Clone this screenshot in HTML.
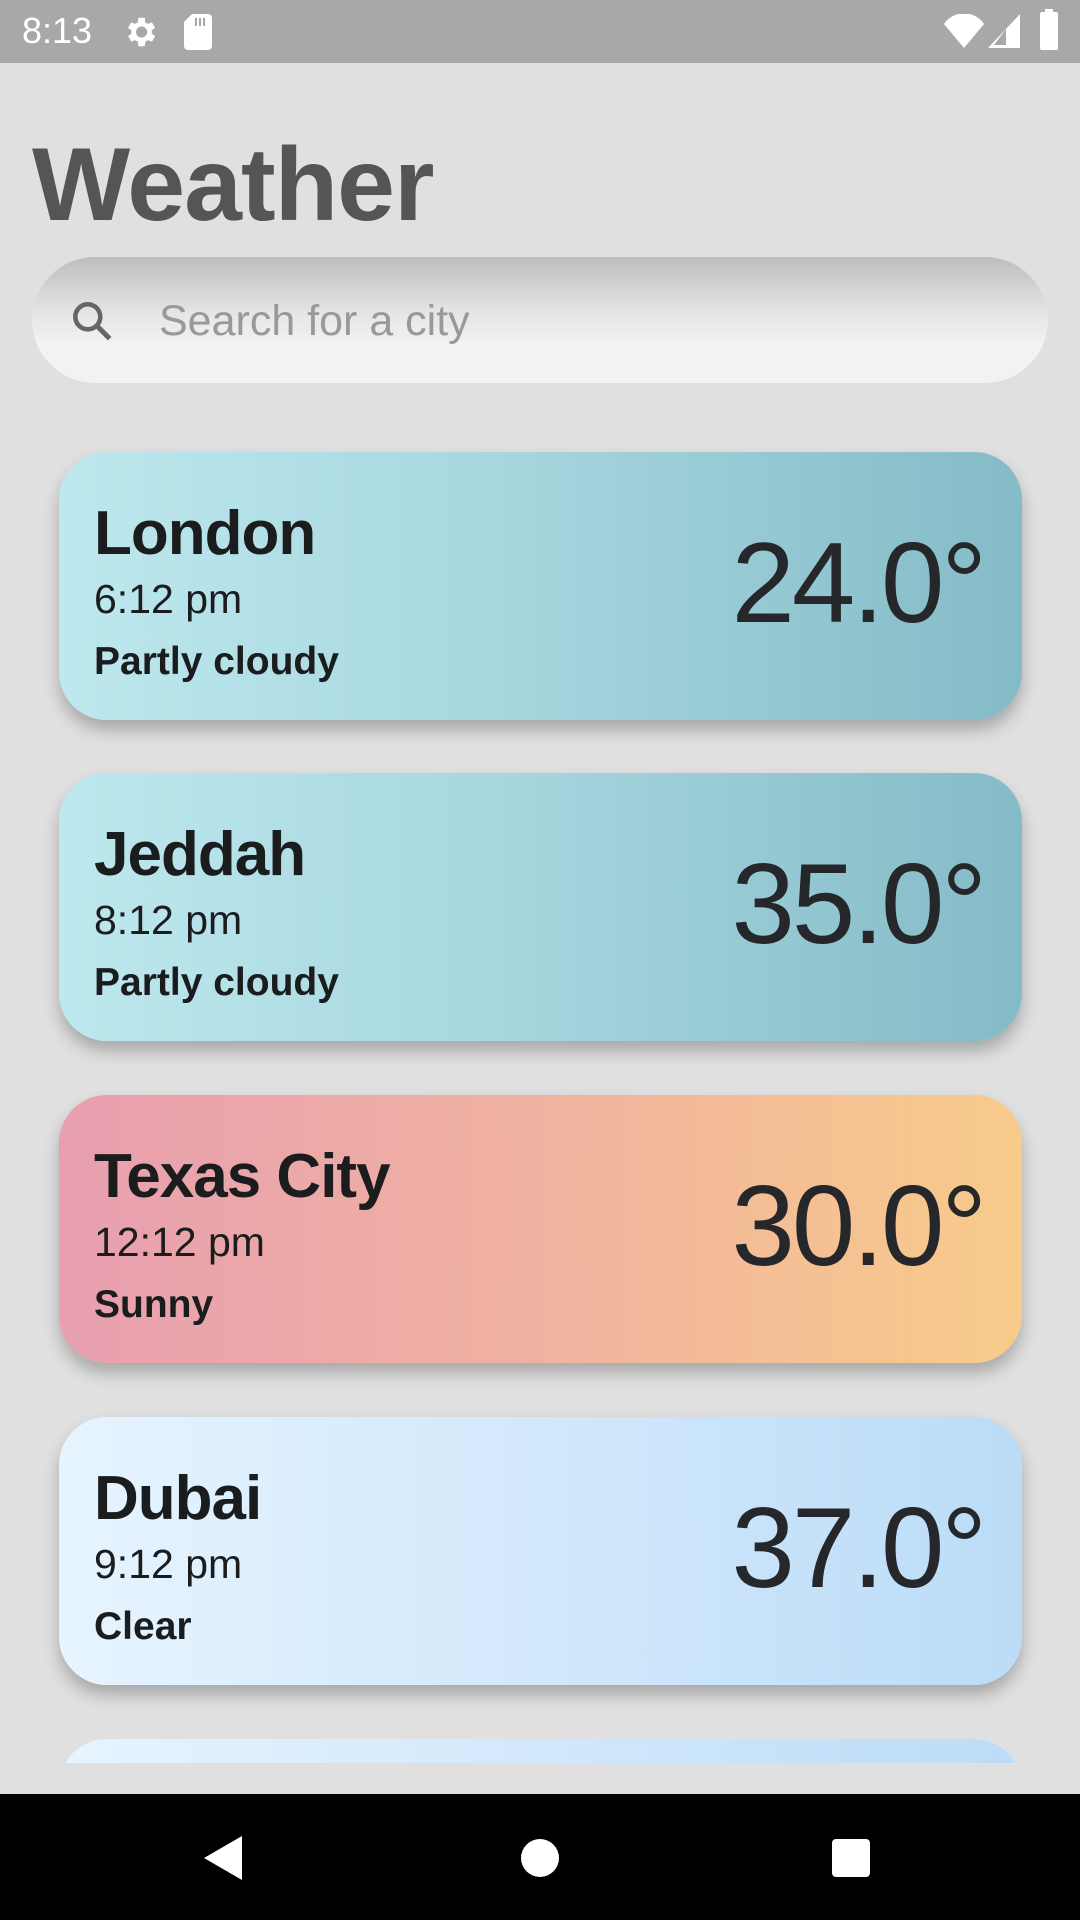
<!DOCTYPE html>
<html><head><meta charset="utf-8"><style>
*{margin:0;padding:0;box-sizing:border-box}
body{width:1080px;height:1920px;background:#e0e0e0;font-family:"Liberation Sans",sans-serif;position:relative;overflow:hidden}
.status{position:absolute;top:0;left:0;width:1080px;height:63px;background:#a8a8a8;color:#fff}
.title{position:absolute;left:32px;top:126px;font-size:104px;font-weight:bold;color:#555;letter-spacing:-1px}
.search{position:absolute;left:32px;top:257px;width:1016px;height:126px;border-radius:63px;background:linear-gradient(#bdbdbd 0%,#e6e6e6 45%,#f2f2f2 70%,#f2f2f2 100%)}
.search .ph{position:absolute;left:127px;top:40px;font-size:43px;color:#999}
.card{position:absolute;left:59px;width:963px;height:268px;border-radius:48px;box-shadow:0 10px 16px rgba(0,0,0,.25);overflow:hidden;color:#1a1c1e}
.card .n{position:absolute;left:35px;top:46px;font-size:62px;font-weight:bold;letter-spacing:-1px}
.card .t{position:absolute;left:35px;top:124px;font-size:41px}
.card .c{position:absolute;left:35px;top:188px;font-size:39px;font-weight:bold}
.card .tp{position:absolute;right:38px;top:66px;font-size:114px;letter-spacing:-3px;color:#25272a}
.blue{background:linear-gradient(90deg,#bde8ee,#a8d7df 45%,#84bbc7)}
.warm{background:linear-gradient(90deg,#e89fb0,#efb0a2 45%,#f8cb8a)}
.sky{background:linear-gradient(90deg,#e6f4ff,#d2e8fb 50%,#bbdcf7)}
.nav{position:absolute;left:0;top:1794px;width:1080px;height:126px;background:#000}
</style></head><body>
<div class="status">
<div style="position:absolute;left:22px;top:10px;font-size:36px">8:13</div>
<svg style="position:absolute;left:121px;top:13px" width="38" height="38" viewBox="0 0 24 24"><path fill="#fff" d="M19.4 13a7.5 7.5 0 0 0 0-2l2.1-1.6-2-3.5-2.5 1a7 7 0 0 0-1.7-1L15 3h-4l-.4 2.9a7 7 0 0 0-1.7 1l-2.5-1-2 3.5L6.6 11a7.5 7.5 0 0 0 0 2l-2.1 1.6 2 3.5 2.5-1a7 7 0 0 0 1.7 1L11 21h4l.4-2.9a7 7 0 0 0 1.7-1l2.5 1 2-3.5zM13 15.5a3.5 3.5 0 1 1 0-7 3.5 3.5 0 0 1 0 7z"/></svg>
<svg style="position:absolute;left:184px;top:14px" width="28" height="36" viewBox="0 0 14 18"><path fill="#fff" d="M4 0h8a2 2 0 0 1 2 2v14a2 2 0 0 1-2 2H2a2 2 0 0 1-2-2V4z"/><path stroke="#a8a8a8" stroke-width="1" d="M6 2v4M8 2v4M10 2v4"/></svg>
<svg style="position:absolute;left:944px;top:14px" width="40" height="34" viewBox="0 0 40 34"><path fill="#fff" d="M0 10 A24 24 0 0 1 40 10 L20 34z"/></svg>
<svg style="position:absolute;left:988px;top:14px" width="32" height="34" viewBox="0 0 32 34"><path fill="#fff" d="M32 0v34H0z"/><path fill="#a8a8a8" d="M18 15v16H6z"/></svg>
<div style="position:absolute;left:1040px;top:12px;width:18px;height:38px;background:#fff;border-radius:2px"></div>
<div style="position:absolute;left:1045px;top:9px;width:8px;height:4px;background:#fff"></div>
</div>
<div class="title">Weather</div>
<div class="search">
<svg style="position:absolute;left:36px;top:40px" width="50" height="50" viewBox="0 0 24 24"><circle cx="9.5" cy="9.5" r="6" fill="none" stroke="#666" stroke-width="2.2"/><path d="M14 14l6 6" stroke="#666" stroke-width="2.4"/></svg>
<div class="ph">Search for a city</div>
</div>
<div class="card blue" style="top:452px"><div class="n">London</div><div class="t">6:12 pm</div><div class="c">Partly cloudy</div><div class="tp">24.0°</div></div>
<div class="card blue" style="top:773px"><div class="n">Jeddah</div><div class="t">8:12 pm</div><div class="c">Partly cloudy</div><div class="tp">35.0°</div></div>
<div class="card warm" style="top:1095px"><div class="n">Texas City</div><div class="t">12:12 pm</div><div class="c">Sunny</div><div class="tp">30.0°</div></div>
<div class="card sky" style="top:1417px"><div class="n">Dubai</div><div class="t">9:12 pm</div><div class="c">Clear</div><div class="tp">37.0°</div></div>
<div style="position:absolute;left:0;top:1739px;width:1080px;height:24px;overflow:hidden"><div class="card sky" style="top:0;left:59px;box-shadow:none"></div></div>
<div class="nav">
<svg style="position:absolute;left:204px;top:42px" width="40" height="44" viewBox="0 0 40 44"><path fill="#fff" d="M38 0v44L0 22z"/></svg>
<div style="position:absolute;left:521px;top:45px;width:38px;height:38px;border-radius:50%;background:#fff"></div>
<div style="position:absolute;left:832px;top:45px;width:38px;height:38px;border-radius:4px;background:#fff"></div>
</div>
</body></html>
